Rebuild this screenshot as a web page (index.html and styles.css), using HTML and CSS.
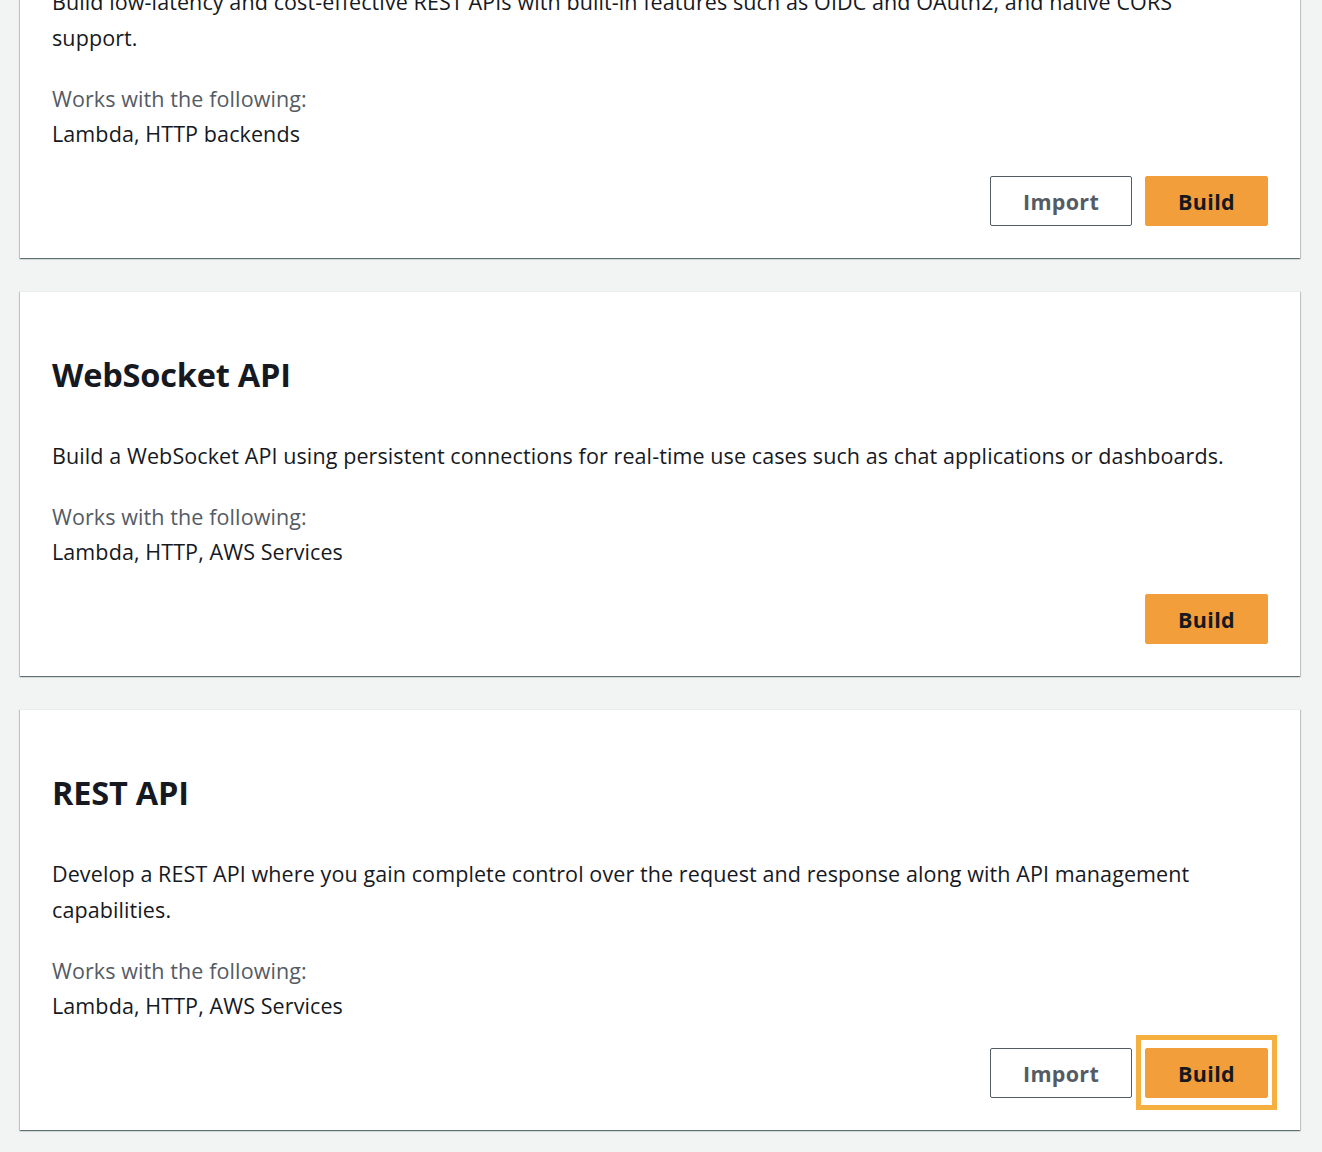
FILE: index.html
```html
<!DOCTYPE html>
<html lang="en">
<head>
<meta charset="utf-8">
<title>Choose an API type</title>
<link rel="stylesheet" href="styles.css">
</head>
<body>
<main class="list">
  <section class="card">
    <h2 class="card-title">HTTP API</h2>
    <p class="card-desc">Build low-latency and cost-effective REST APIs with built-in features such as OIDC and OAuth2, and native CORS support.</p>
    <div class="works-label">Works with the following:</div>
    <div class="works-value">Lambda, HTTP backends</div>
    <div class="actions">
      <button class="btn btn-normal">Import</button>
      <button class="btn btn-primary">Build</button>
    </div>
  </section>
  <section class="card">
    <h2 class="card-title">WebSocket API</h2>
    <p class="card-desc">Build a WebSocket API using persistent connections for real-time use cases such as chat applications or dashboards.</p>
    <div class="works-label">Works with the following:</div>
    <div class="works-value">Lambda, HTTP, AWS Services</div>
    <div class="actions">
      <button class="btn btn-primary">Build</button>
    </div>
  </section>
  <section class="card">
    <h2 class="card-title">REST API</h2>
    <p class="card-desc">Develop a REST API where you gain complete control over the request and response along with API management capabilities.</p>
    <div class="works-label">Works with the following:</div>
    <div class="works-value">Lambda, HTTP, AWS Services</div>
    <div class="actions">
      <button class="btn btn-normal">Import</button>
      <button class="btn btn-primary btn-focused">Build</button>
    </div>
  </section>
</main>
</body>
</html>
```
FILE: styles.css
```css
* { box-sizing: border-box; }
html, body {
  margin: 0;
  padding: 0;
  background: #f2f3f3;
  overflow: hidden;
}
body {
  font-family: "Open Sans", "Noto Sans", sans-serif;
  color: #16191f;
  height: 1152px;
}
.list {
  display: flex;
  flex-direction: column;
  gap: 33px;
  width: 1280px;
  margin: -163px 0 0 20px;
}
.card {
  background: #fff;
  border-top: 1px solid #eaeded;
  box-shadow: 0 1px 1px 0 rgba(0, 28, 36, 0.45), 1px 1px 1px 0 rgba(0, 28, 36, 0.15), -1px 1px 1px 0 rgba(0, 28, 36, 0.15);
  padding: 63px 32px 32px;
  display: flex;
  flex-direction: column;
}
.card-title {
  margin: 0 0 43px;
  font-size: 32.5px;
  line-height: 40px;
  font-weight: 700;
  letter-spacing: -0.2px;
}
.card-desc {
  margin: 0 0 25px;
  max-width: 1200px;
  font-size: 21.5px;
  line-height: 36px;
  letter-spacing: 0.1px;
}
.works-label {
  font-size: 21.5px;
  line-height: 35px;
  letter-spacing: 0.1px;
  color: #545b64;
}
.works-value {
  font-size: 21.5px;
  line-height: 36px;
  letter-spacing: 0.1px;
}
.actions {
  display: flex;
  justify-content: flex-end;
  gap: 13px;
  margin-top: 24px;
}
.btn {
  position: relative;
  font-family: inherit;
  font-size: 21.5px;
  font-weight: 700;
  height: 50px;
  border-radius: 2px;
  cursor: pointer;
  letter-spacing: 0.3px;
  padding: 0;
}
.btn-normal {
  width: 142px;
  background: #fff;
  color: #545b64;
  border: 1px solid #545b64;
}
.btn-primary {
  width: 123px;
  background: #f29e3b;
  color: #16191f;
  border: 1px solid #f29e3b;
}
.btn-focused::after {
  content: "";
  position: absolute;
  left: -10px;
  right: -10px;
  top: -14px;
  bottom: -13px;
  border: 5px solid #f5b03f;
}
```
